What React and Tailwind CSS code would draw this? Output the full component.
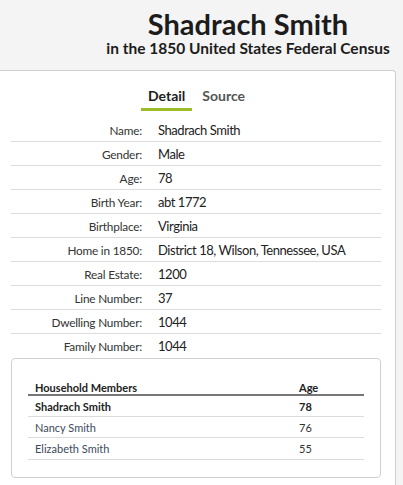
export default function App() {
  const rows = [
    ["Name:", "Shadrach Smith"],
    ["Gender:", "Male"],
    ["Age:", "78"],
    ["Birth Year:", "abt 1772"],
    ["Birthplace:", "Virginia"],
    ["Home in 1850:", "District 18, Wilson, Tennessee, USA"],
    ["Real Estate:", "1200"],
    ["Line Number:", "37"],
    ["Dwelling Number:", "1044"],
    ["Family Number:", "1044"],
  ];
  const members = [
    ["Shadrach Smith", "78", true],
    ["Nancy Smith", "76", false],
    ["Elizabeth Smith", "55", false],
  ];
  return (
    <div className="w-[403px] h-[485px] overflow-hidden bg-[#f4f4f4] text-[#222]" style={{ fontFamily: "Lato, 'Noto Sans', sans-serif" }}>
      <div className="h-[70px] pl-[93px] pt-[8px] text-center">
        <div className="text-[29px] font-bold leading-[31px] text-[#1c1c1c]">Shadrach Smith</div>
        <div className="text-[15.5px] font-bold leading-[18px] text-[#1c1c1c]">in the 1850 United States Federal Census</div>
      </div>
      <div className="ml-[-6px] w-[402px] h-[420px] bg-white border-t border-r border-l border-[#cfcfcf] rounded-tr-[4px] pl-[16px] pr-[16px]">
        <div className="flex justify-center gap-[10px] pt-[15px] pr-[4px]">
          <div className="px-[7px] pb-[3px] border-b-[3px] border-[#9bbb2b] text-[14px] font-bold text-[#1c1c1c] leading-[19px]">Detail</div>
          <div className="text-[14px] font-bold text-[#555] leading-[19px]">Source</div>
        </div>
        <div className="mt-[7px] w-[370px]">
          {rows.map(([k, v], i) => (
            <div key={k} className={`flex items-center h-[24px] pt-[2px] ${i < rows.length - 1 ? "border-b border-[#dcdcdc]" : ""}`}>
              <div className="w-[131px] text-right text-[11.8px] tracking-[-0.2px] text-[#333]">{k}</div>
              <div className="pl-[16px] text-[13px] tracking-[-0.45px] text-[#222]">{v}</div>
            </div>
          ))}
        </div>
        <div className="w-[370px] h-[120px] border border-[#cfcfcf] rounded-[4px] px-[16px] pt-[20px]">
          <div className="flex items-end h-[17px] pl-[7px] border-b-[2px] border-[#777] text-[11px] leading-[13px] font-bold text-[#222]">
            <div className="w-[264px]">Household Members</div>
            <div>Age</div>
          </div>
          {members.map(([n, a, b], i) => (
            <div key={n} className={`flex items-center ${i === 2 ? "h-[22px]" : "h-[21px]"} pt-[2px] pl-[7px] border-b border-[#dcdcdc] text-[11px] ${b ? "font-bold text-[#222]" : "text-[#3d4a5c]"}`}>
              <div className="w-[264px]">{n}</div>
              <div className={b ? "text-[#222]" : "text-[#333]"}>{a}</div>
            </div>
          ))}
        </div>
      </div>
    </div>
  );
}
